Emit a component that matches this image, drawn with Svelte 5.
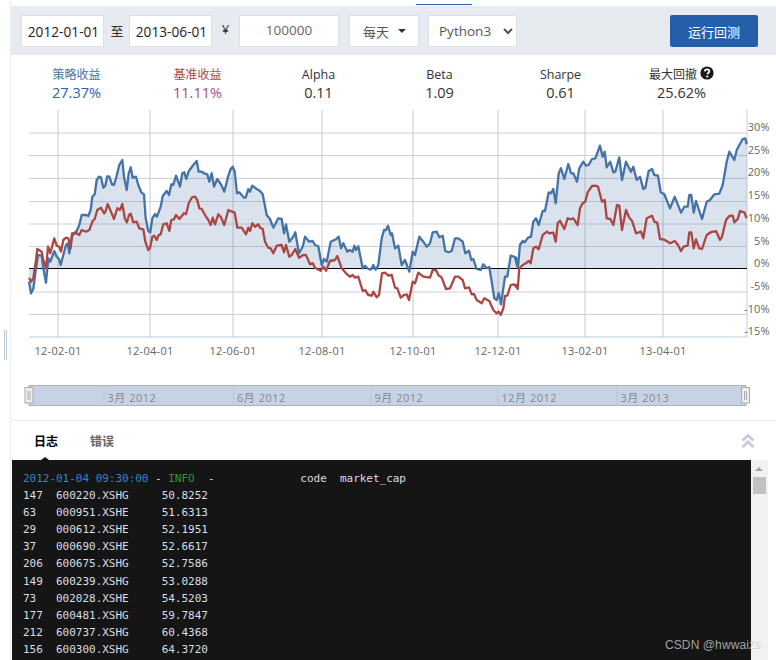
<script>
  const z = (pts, ox) => pts.map(([x, y]) => [ox + x / 3, 105 + y / 3]);
  const blueA = [[87,530],[93,565],[100,552],[108,490],[114,450],[125,452],[130,490],[138,533],[145,460],[151,470],[163,438],[170,455],[177,462],[182,480],[190,450],[198,420],[203,415],[208,445],[216,395],[222,385],[230,378],[238,360],[245,330],[258,330],[265,333],[272,315],[277,275],[284,268],[290,225],[297,215],[303,217],[310,248],[316,242],[322,214],[328,214],[336,238],[342,240],[350,212],[358,180],[367,165],[372,215],[380,255],[386,205],[392,187],[398,218],[408,215],[415,240],[424,262],[432,268],[437,340],[445,378],[451,382],[457,340],[465,327],[471,335],[482,305],[488,273],[500,258],[507,270],[514,238],[520,240],[528,212],[540,245],[547,205],[553,202],[559,222],[567,197],[580,180],[590,168],[596,200],[605,200],[612,205],[622,208],[628,230],[635,205],[642,245],[652,222],[665,242],[673,260],[684,215],[692,192],[698,185],[704,200],[711,265],[718,262],[732,278],[737,278],[745,252],[750,260],[757,242],[770,252]];
  const blueB = [[0,258],[8,268],[20,330],[30,342],[40,368],[55,340],[65,342],[72,385],[78,358],[88,410],[100,395],[106,382],[117,445],[128,425],[135,395],[148,410],[158,408],[165,420],[175,424],[185,480],[192,462],[200,470],[212,410],[228,403],[236,395],[243,430],[250,415],[262,440],[268,435],[278,440],[283,422],[288,435],[295,424],[308,490],[315,482],[325,492],[332,494],[340,480],[347,494],[355,480],[365,400],[372,375],[378,375],[384,362],[392,390],[396,385],[405,430],[415,422],[425,480],[435,465],[448,500],[458,440],[465,450],[478,395],[490,410],[500,425],[510,415],[518,382],[530,380],[538,397],[548,392],[556,438],[565,442],[575,438],[585,400],[595,400],[608,410],[616,445],[627,437],[634,465],[640,462],[650,492],[662,495],[670,478],[680,490],[688,486],[695,530],[703,580],[710,585],[716,565],[723,598],[735,515],[742,515],[752,452],[765,456],[772,485]];
  const blueC = [[0,458],[6,485],[12,420],[20,408],[26,412],[36,398],[45,395],[52,350],[60,340],[68,360],[80,318],[87,318],[98,262],[105,265],[112,252],[119,295],[128,205],[135,190],[145,222],[157,177],[165,205],[172,205],[183,230],[190,190],[202,170],[210,182],[218,180],[228,162],[238,160],[252,122],[260,155],[266,140],[272,187],[283,170],[292,202],[298,200],[310,157],[318,225],[330,170],[345,200],[352,185],[362,225],[372,215],[382,252],[388,248],[398,198],[408,192],[415,210],[426,212],[434,262],[445,268],[462,310],[476,275],[495,323],[505,305],[515,305],[520,270],[526,270],[533,323],[540,288],[558,342],[572,290],[582,285],[595,268],[610,266],[620,240],[632,170],[640,140],[655,165],[662,135],[680,102],[688,100],[692,118]];
  const redA = [[87,518],[93,530],[100,520],[108,465],[112,432],[125,440],[130,465],[138,490],[144,425],[151,445],[163,400],[170,422],[178,425],[183,440],[190,405],[198,398],[205,400],[212,430],[216,385],[228,384],[238,390],[245,375],[258,380],[268,375],[278,348],[284,342],[292,315],[303,308],[312,325],[316,322],[323,297],[333,320],[342,342],[352,310],[360,315],[367,297],[375,342],[381,352],[387,330],[392,326],[400,352],[410,350],[418,370],[430,373],[436,410],[445,435],[450,430],[457,395],[463,392],[470,405],[476,390],[482,388],[490,358],[500,355],[508,378],[514,345],[522,343],[528,330],[538,342],[552,325],[558,328],[566,295],[576,277],[585,275],[592,285],[598,310],[605,312],[618,335],[625,345],[632,360],[638,338],[645,358],[655,328],[662,335],[673,360],[685,315],[696,320],[704,323],[712,368],[725,368],[738,388],[745,368],[750,378],[757,355],[765,365],[775,358]];
  const redB = [[0,368],[8,372],[15,410],[25,428],[32,430],[40,445],[50,422],[65,420],[72,442],[78,420],[88,455],[95,450],[106,432],[117,458],[130,450],[138,450],[150,478],[158,475],[165,488],[182,497],[190,485],[198,497],[210,468],[225,465],[232,453],[245,490],[258,505],[270,515],[278,510],[285,518],[295,515],[308,558],[315,555],[325,570],[335,572],[340,560],[350,577],[357,570],[366,505],[375,503],[385,512],[395,510],[405,548],[412,550],[422,578],[432,570],[440,568],[447,585],[458,530],[465,535],[475,503],[490,515],[510,518],[518,495],[528,495],[535,510],[545,518],[558,552],[570,550],[585,515],[595,515],[608,525],[615,550],[627,547],[635,568],[642,567],[650,585],[665,595],[673,580],[688,588],[700,615],[710,625],[716,620],[722,630],[730,610],[735,573],[742,572],[752,540],[762,538],[772,550]];
  const redC = [[0,540],[5,552],[10,490],[20,480],[32,473],[38,468],[44,475],[52,430],[60,425],[68,433],[80,390],[93,380],[100,385],[112,383],[119,410],[125,355],[132,347],[145,372],[155,340],[165,343],[172,340],[185,360],[192,310],[200,295],[208,290],[215,262],[228,243],[240,242],[246,245],[258,290],[266,285],[272,340],[283,342],[292,360],[303,300],[310,302],[318,375],[330,315],[340,338],[348,347],[360,385],[375,380],[382,400],[392,340],[408,332],[415,350],[424,353],[432,402],[445,404],[463,415],[476,408],[486,420],[495,438],[503,425],[515,422],[520,382],[526,382],[533,430],[540,403],[550,430],[558,432],[572,390],[582,383],[590,380],[595,380],[600,378],[612,405],[618,395],[630,345],[640,333],[650,332],[655,352],[665,342],[672,318],[685,322],[692,340]];

  const toStr = (p) => p.map(([x, y]) => `${x.toFixed(1)},${y.toFixed(1)}`).join(' ');
  const blue = [...z(blueA, 0), ...z(blueB, 260), ...z(blueC, 516)];
  const red = [...z(redA, 0), ...z(redB, 260), ...z(redC, 516)];
  const zeroY = 268.5;
  const area = toStr([[29, zeroY], ...blue, [747, zeroY]]);

  const hLines = [109.5, 133, 155.5, 178.5, 201.5, 224, 246.5, 292, 314.5];
  const xTicks = [
    [58, '12-02-01'], [150, '12-04-01'], [233, '12-06-01'], [322, '12-08-01'],
    [413, '12-10-01'], [498, '12-12-01'], [585, '13-02-01'], [663, '13-04-01']
  ];
  const yLabels = [
    ['30%', 127], ['25%', 149.5], ['20%', 172], ['15%', 195], ['10%', 218], ['5%', 240.5],
    ['0%', 263], ['-5%', 286], ['-10%', 308.5], ['-15%', 331]
  ];
  const navLabels = [
    [104, '3月 2012'], [233.5, '6月 2012'], [371, '9月 2012'], [498, '12月 2012'], [617, '3月 2013']
  ];
  const stats = [
    { label: '策略收益', value: '27.37%', cls: 'blue cjk' },
    { label: '基准收益', value: '11.11%', cls: 'red cjk' },
    { label: 'Alpha', value: '0.11', cls: '' },
    { label: 'Beta', value: '1.09', cls: '' },
    { label: 'Sharpe', value: '0.61', cls: '' },
    { label: '最大回撤', value: '25.62%', cls: 'cjk', help: true }
  ];
  const rows = [
    ['147', '600220.XSHG', '50.8252'], ['63', '000951.XSHE', '51.6313'],
    ['29', '000612.XSHE', '52.1951'], ['37', '000690.XSHE', '52.6617'],
    ['206', '600675.XSHG', '52.7586'], ['149', '600239.XSHG', '53.0288'],
    ['73', '002028.XSHE', '54.5203'], ['177', '600481.XSHG', '59.7847'],
    ['212', '600737.XSHG', '60.4368'], ['156', '600300.XSHG', '64.3720']
  ];
  const headTail = '  -' + ' '.repeat(13) + 'code  market_cap';
  const rowText = (i, code, cap) => `${i.padEnd(4, ' ')} ${code}     ${cap}`;
</script>

<div class="page">
  <div class="rail"><i></i><i></i></div>
  <div class="main">
    <div class="tabstrip"><span class="activebar"></span></div>

    <div class="toolbar">
      <input class="field date" value="2012-01-01" readonly />
      <span class="sep">至</span>
      <input class="field date" value="2013-06-01" readonly />
      <span class="yen">¥</span>
      <input class="field cash" value="100000" readonly />
      <div class="field freq"><span>每天</span><span class="caret"></span></div>
      <select class="field lang"><option>Python3</option></select>
      <button class="run">运行回测</button>
    </div>

    <div class="stats">
      {#each stats as s}
        <div class="stat {s.cls}">
          <div class="label">{s.label}{#if s.help}<svg class="help" width="14" height="14" viewBox="0 0 14 14"><circle cx="7" cy="7" r="6.6" fill="#1a1a1a"/><path d="M4.8 5.4c.1-1.300 1-2 2.300-2 1.300 0 2.200.8 2.200 1.900 0 1.700-1.900 1.600-1.900 3" fill="none" stroke="#fff" stroke-width="1.700"/><rect x="6.300" y="9.600" width="1.900" height="1.800" fill="#fff"/></svg>{/if}</div>
          <div class="value">{s.value}</div>
        </div>
      {/each}
    </div>

    <svg class="chart" width="765" height="310" viewBox="11 110 765 310">
      <rect x="29" y="109.500" width="718" height="227.500" fill="#fff" />
      {#each hLines as y}
        <line x1="29" x2="747" y1={y} y2={y} stroke="#d0d1d5" stroke-width="1" />
      {/each}
      {#each xTicks as [x]}
        <line x1={x} x2={x} y1="110" y2="337" stroke="#c4cad5" stroke-width="1" />
      {/each}
      <line x1="747" x2="747" y1="110" y2="337" stroke="#c0cfe0" />
      <line x1="29" x2="747" y1="337" y2="337" stroke="#b9cde0" />
      <polygon points={area} fill="#3d6a9f" fill-opacity="0.19" />
      <line x1="29" x2="747" y1={zeroY} y2={zeroY} stroke="#000" stroke-width="1.200" />
      <polyline points={toStr(blue)} fill="none" stroke="#4572a7" stroke-width="2.300" stroke-linejoin="round" />
      <polyline points={toStr(red)} fill="none" stroke="#aa4643" stroke-width="2.300" stroke-linejoin="round" />
      {#each xTicks as [x, t]}
        <text class="axis spaced" {x} y="355" text-anchor="middle">{t}</text>
      {/each}
      {#each yLabels as [t, y]}
        <text class="axis" x="769.500" y={y + 4} text-anchor="end">{t}</text>
      {/each}

      <rect x="29" y="385.500" width="717" height="20" fill="#c6d3e5" stroke="#b0b0b0" />
      {#each navLabels as [x, t]}
        <line x1={x} x2={x} y1="386" y2="405" stroke="#bac7da" />
        <text class="nav" x={x + 3.500} y="401.500">{t}</text>
      {/each}
      <g class="handle">
        <rect x="25" y="387.500" width="8" height="15.500" />
        <line x1="28" x2="28" y1="391" y2="400" />
        <line x1="30" x2="30" y1="391" y2="400" />
        <rect x="741.500" y="387.500" width="8" height="15.500" />
        <line x1="744.500" x2="744.500" y1="391" y2="400" />
        <line x1="746.500" x2="746.500" y1="391" y2="400" />
      </g>
    </svg>

    <div class="tabs">
      <span class="tab active">日志</span>
      <span class="tab">错误</span>
      <svg class="collapse" width="14" height="16" viewBox="0 0 14 16">
        <path d="M1.500 7.500 7 2.500 12.500 7.500M1.500 14 7 9 12.500 14" fill="none" stroke="#c9cdd9" stroke-width="3" />
      </svg>
    </div>

    <div class="logwrap">
      <div class="log">
        <div class="line"><span class="ts">2012-01-04 09:30:00</span>{' - '}<span class="info">INFO</span>{headTail}</div>
        {#each rows as [i, code, cap]}
          <div class="line">{rowText(i, code, cap)}</div>
        {/each}
      </div>
      <div class="scroll"><span class="up"></span><span class="thumb"></span></div>
    </div>
  </div>
  <div class="mark">CSDN @hwwaizs</div>
</div>

<style>
  :global(body) { margin: 0; background: #fff; }
  .page {
    position: relative;
    width: 776px;
    height: 660px;
    overflow: hidden;
    font-family: "Open Sans", "Noto Sans CJK SC", sans-serif;
    color: #333;
  }
  .rail {
    position: absolute;
    left: 4px;
    top: 330px;
    display: flex;
    gap: 1px;
  }
  .rail i { display: block; width: 1px; height: 30px; background: #bcc6d6; }
  .main {
    margin-left: 10px;
    border-left: 1px solid #eceef2;
    height: 660px;
    display: flex;
    flex-direction: column;
  }
  .tabstrip { height: 6px; position: relative; flex: none; }
  .activebar {
    position: absolute;
    left: 405px;
    top: 4px;
    width: 56px;
    height: 1px;
    background: #2b62ad;
  }
  .toolbar {
    flex: none;
    height: 49px;
    box-sizing: border-box;
    background: #e7eaef;
    display: flex;
    align-items: flex-start;
    padding: 9px 18px 0 10px;
    font-size: 13.500px;
  }
  .field {
    box-sizing: border-box;
    height: 32px;
    background: #fff;
    border: 1px solid #dcdfe6;
    font: inherit;
    color: #333;
    outline: none;
    margin: 0;
  }
  .date { width: 83px; padding: 0 0 0 2px; text-align: center; font-size: 13.700px; color: #222; }
  .sep { width: 25px; padding-left: 1px; box-sizing: border-box; text-align: center; line-height: 32px; color: #333; font-size: 13px; }
  .yen { width: 27px; text-align: center; line-height: 28px; color: #333; font-size: 13px; }
  .cash { width: 100px; margin-right: 10px; text-align: center; color: #666; padding: 0 0 2px; }
  .freq {
    width: 70px;
    margin-right: 9px;
    display: flex;
    align-items: center;
    padding-left: 13px;
    gap: 9px;
    color: #555;
    font-size: 13px;
  }
  .caret {
    width: 0;
    height: 0;
    border-left: 4px solid transparent;
    border-right: 4px solid transparent;
    border-top: 4px solid #333;
  }
  .lang { width: 89px; padding: 0 0 0 6px; color: #555; }
  .run {
    margin-left: auto;
    width: 88px;
    height: 32px;
    border: 0;
    border-radius: 2px;
    background: #265fa9;
    color: #fff;
    font: inherit;
    font-size: 13px;
    padding: 0;
  }
  .stats {
    flex: none;
    height: 55px;
    box-sizing: border-box;
    display: grid;
    grid-template-columns: repeat(6, 121px);
    padding: 12px 0 0 5px;
    text-align: center;
  }
  .label { font-size: 12.500px; line-height: 16px; color: #333; height: 16px; }
  .cjk .label { font-size: 12px; }
  .value { font-size: 14.500px; line-height: 20px; color: #333; }
  .blue .label { color: #4572a7; }
  .blue .value { color: #2b62ad; }
  .red .label { color: #aa4643; }
  .red .value { color: #b0487c; }
  .help { margin-left: 3px; vertical-align: -1px; margin-top: -3px; }
  .chart { display: block; flex: none; }
  .axis { font-size: 11px; fill: #666; }
  .spaced { letter-spacing: 0.300px; }
  .nav { font-size: 11px; fill: #8a8a8a; letter-spacing: 0.500px; }
  .handle rect { fill: #eeeeee; stroke: #aaa; }
  .handle line { stroke: #aaa; }
  .tabs {
    flex: none;
    box-sizing: border-box;
    height: 40px;
    border-top: 1px solid #e7eaef;
    display: flex;
    align-items: center;
    gap: 32px;
    padding: 0 20px 0 23px;
    font-size: 12px;
    position: relative;
  }
  .tab { color: #666; font-weight: 600; }
  .tab.active { color: #000; font-weight: 700; }
  .tab.active::after {
    content: "";
    position: absolute;
    left: 30px;
    bottom: 0;
    border-left: 4px solid transparent;
    border-right: 4px solid transparent;
    border-bottom: 3px solid #151515;
  }
  .collapse { margin-left: auto; margin-right: 1px; }
  .logwrap { flex: 1; display: flex; min-height: 0; margin-left: 1px; }
  .log {
    width: 739px;
    box-sizing: border-box;
    background: #151515;
    padding: 10px 0 0 11px;
    color: #d8dee4;
    font: 11px/17.100px "DejaVu Sans Mono", monospace;
    letter-spacing: -0.020px;
    overflow: hidden;
  }
  .line { white-space: pre; }
  .ts { color: #2f86c9; }
  .info { color: #2f9a2f; }
  .scroll { width: 17px; background: #f1f1f1; position: relative; }
  .up {
    position: absolute;
    left: 4px;
    top: 7px;
    border-left: 4px solid transparent;
    border-right: 4px solid transparent;
    border-bottom: 4px solid #a3a3a3;
  }
  .thumb {
    position: absolute;
    left: 2px;
    top: 17px;
    width: 13px;
    height: 17px;
    background: #c1c1c1;
  }
  .mark {
    position: absolute;
    left: 665px;
    top: 638px;
    font: 12px "Liberation Sans", sans-serif;
    color: rgba(200, 200, 200, 0.8);
    letter-spacing: 0.100px;
  }
</style>
